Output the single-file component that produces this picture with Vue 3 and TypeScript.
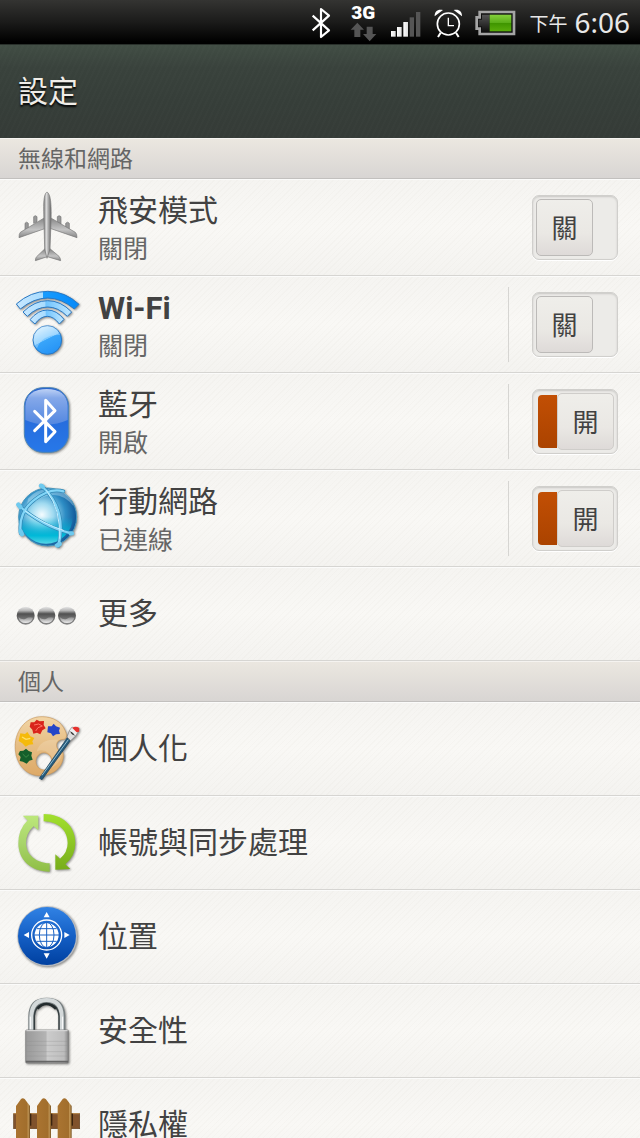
<script setup lang="ts">
import { ref } from 'vue'

interface NetworkItem {
  id: string
  title: string
  on: boolean
  onText: string
  offText: string
  divided: boolean
}

const network = ref<NetworkItem[]>([
  { id: 'airplane', title: '飛安模式', on: false, onText: '開啟', offText: '關閉', divided: false },
  { id: 'wifi', title: 'Wi-Fi', on: false, onText: '開啟', offText: '關閉', divided: true },
  { id: 'bluetooth', title: '藍牙', on: true, onText: '開啟', offText: '關閉', divided: true },
  { id: 'mobile', title: '行動網路', on: true, onText: '已連線', offText: '關閉', divided: true },
])

const personal = [
  { id: 'palette', title: '個人化' },
  { id: 'sync', title: '帳號與同步處理' },
  { id: 'location', title: '位置' },
  { id: 'lock', title: '安全性' },
  { id: 'fence', title: '隱私權' },
]

const pickets = [48, 111, 173]
const dots = [77, 139, 201]
</script>

<template>
  <div class="screen">
    <div class="status">
      <svg class="s-bt" viewBox="30 0 84 132" aria-hidden="true">
        <path d="M38 47 L87 91 L63 111 V27 L87 47 L38 91" fill="none" stroke="#fff" stroke-width="6.5" stroke-linejoin="round" />
      </svg>
      <svg class="s-3g" viewBox="150 0 84 132" aria-hidden="true">
        <text x="154" y="58" font-size="57" class="g3">3G</text>
        <path d="M172 68 L192 89 H181 V111 H163 V89 H152Z" fill="#555" />
        <path d="M209 124 L229 102 H218 V80 H200 V102 H189Z" fill="#555" />
      </svg>
      <svg class="s-signal" viewBox="270 0 96 132" aria-hidden="true">
        <defs>
          <linearGradient id="sg" x1="0" y1="0" x2="1" y2="0"><stop offset="0" stop-color="#fff" /><stop offset="1" stop-color="#ddd" /></linearGradient>
        </defs>
        <rect x="273" y="93" width="14" height="17" fill="url(#sg)" />
        <rect x="291" y="81" width="14" height="29" fill="url(#sg)" />
        <rect x="310" y="66" width="14" height="44" fill="url(#sg)" />
        <rect x="329" y="52" width="13" height="58" fill="#555" />
        <rect x="348" y="36" width="13" height="74" fill="#555" />
      </svg>
      <svg class="s-alarm" viewBox="402 0 87 132" aria-hidden="true">
        <g fill="none" stroke="#fff" stroke-width="5">
          <circle cx="445" cy="72" r="33" />
          <path d="M445 53 V77 H462" stroke-width="4" />
          <path d="M422 98 L414 111 M468 98 L476 111" stroke-width="6" />
        </g>
        <path d="M404 49 C403 34 414 26 429 30Z M486 49 C487 34 476 26 461 30Z" fill="#fff" />
      </svg>
      <svg class="s-battery" viewBox="525 0 126 132" aria-hidden="true">
        <defs>
          <linearGradient id="bat" x1="0" y1="0" x2="0" y2="1"><stop offset="0" stop-color="#85d13b" /><stop offset=".5" stop-color="#58ac18" /><stop offset=".52" stop-color="#3f9500" /><stop offset="1" stop-color="#59ad0b" /></linearGradient>
          <linearGradient id="batoff" x1="0" y1="0" x2="0" y2="1"><stop offset="0" stop-color="#555" /><stop offset="1" stop-color="#111" /></linearGradient>
        </defs>
        <path d="M539 36 H642 V102 H539 V86 H530 V52 H539Z" fill="#111" stroke="#a5a5a5" stroke-width="8" />
        <path d="M546 44 H569 V94 H546 V79 H536 V59 H546Z" fill="url(#batoff)" />
        <rect x="569" y="44" width="65" height="50" fill="url(#bat)" />
      </svg>
      <span class="ampm">下午</span>
      <time class="clock">6:06</time>
    </div>

    <header class="header"><h1>設定</h1></header>

    <main class="list">
      <h2 class="section">無線和網路</h2>
      <div v-for="item in network" :key="item.id" class="row tall">
        <button class="entry" type="button">
          <svg v-if="item.id === 'airplane'" class="icon" viewBox="39 33 204 216" aria-hidden="true">
            <defs>
              <linearGradient id="body" x1="0" y1="0" x2="1" y2="0"><stop offset="0" stop-color="#777" /><stop offset=".35" stop-color="#ddd" /><stop offset=".65" stop-color="#a5a5a5" /><stop offset="1" stop-color="#686868" /></linearGradient>
              <linearGradient id="wing" x1="0" y1="0" x2="0" y2="1"><stop offset="0" stop-color="#858585" /><stop offset=".6" stop-color="#c4c4c4" /><stop offset="1" stop-color="#858585" /></linearGradient>
            </defs>
            <g stroke="#777" stroke-width="2" stroke-linejoin="round">
              <path d="M75 150 V130 Q80 123 85 130 V145Z M101 130 V110 Q106 104 111 110 V125Z M172 125 V110 Q177 104 183 110 V132Z M197 145 V130 Q203 123 208 130 V150Z" fill="#999" />
              <path d="M134 113 L61 157 Q57 161 57 173 L134 146 L153 146 L231 173 Q231 161 226 157 L151 113Z" fill="url(#wing)" />
              <path d="M134 207 L110 230 Q106 234 106 242 L142 230 L182 242 Q181 233 177 229 L151 207Z" fill="url(#wing)" />
              <path d="M141 36 C131 42 130 66 132 125 L134 207 L141 235 L150 207 L153 125 C155 66 151 42 141 36Z" fill="url(#body)" />
            </g>
          </svg>

          <svg v-else-if="item.id === 'wifi'" class="icon shadow" viewBox="39 324 204 216" aria-hidden="true">
            <defs>
              <linearGradient id="wa" x1="0" y1="0" x2="1" y2="0"><stop offset="0" stop-color="#c8e8ff" /><stop offset=".42" stop-color="#a8dcff" /><stop offset=".43" stop-color="#169cff" /><stop offset="1" stop-color="#0789f8" /></linearGradient>
              <linearGradient id="wb" x1="0" y1="0" x2="1" y2="0"><stop offset="0" stop-color="#c8e8ff" /><stop offset=".45" stop-color="#a8dcff" /><stop offset=".47" stop-color="#70c4ff" /><stop offset="1" stop-color="#c2e8ff" /></linearGradient>
              <linearGradient id="wd" x1=".2" y1="0" x2=".7" y2="1"><stop offset="0" stop-color="#d8f1ff" /><stop offset=".48" stop-color="#79c7ff" /><stop offset=".5" stop-color="#39a5fa" /><stop offset="1" stop-color="#2492f5" /></linearGradient>
            </defs>
            <g stroke="#2878c4" stroke-width="3" stroke-linejoin="round">
              <path d="M49 372 Q92 334 143 334 Q195 334 237 373 L223 387 Q184 354 143 354 Q101 354 61 387Z" fill="url(#wa)" />
              <path d="M69 396 Q104 362 143 362 Q182 362 215 396 L202 409 Q174 381 143 381 Q110 381 82 409Z" fill="url(#wb)" />
              <path d="M90 419 Q114 390 142 390 Q170 390 192 418 L178 432 Q161 409 142 409 Q121 409 105 432Z" fill="url(#wb)" />
              <circle cx="142" cy="480" r="43" fill="url(#wd)" />
            </g>
            <path d="M102 488 A40 40 0 0 1 180 465 Q126 463 111 505 Q104 500 102 488Z" fill="#fff" opacity=".28" />
          </svg>

          <svg v-else-if="item.id === 'bluetooth'" class="icon shadow" viewBox="39 45 204 216" aria-hidden="true">
            <defs>
              <linearGradient id="bl" x1="0" y1="0" x2="0" y2="1"><stop offset="0" stop-color="#2762d0" /><stop offset="1" stop-color="#2778e9" /></linearGradient>
              <linearGradient id="bh" x1="0" y1="0" x2="0" y2="1"><stop offset="0" stop-color="#bdd1f5" /><stop offset=".25" stop-color="#84a8e9" /><stop offset="1" stop-color="#5387e0" /></linearGradient>
            </defs>
            <rect x="73" y="53" width="133" height="194" rx="56" fill="url(#bl)" stroke="#4d85b5" stroke-width="3" />
            <path d="M76 150 V108 C78 72 104 57 140 57 C177 57 202 73 203 108 V150 Q140 178 76 150Z" fill="url(#bh)" />
            <path d="M104 124 L165 185 L137 215 V91 L165 122 L104 182" fill="none" stroke="#fff" stroke-width="9" stroke-linecap="round" stroke-linejoin="round" />
          </svg>

          <svg v-else class="icon shadow" viewBox="39 336 204 216" aria-hidden="true">
            <defs>
              <radialGradient id="gl" cx=".4" cy=".46" r=".66"><stop offset="0" stop-color="#f4fcff" /><stop offset=".3" stop-color="#9fdaf0" /><stop offset=".62" stop-color="#2d8cc4" /><stop offset="1" stop-color="#0a4688" /></radialGradient>
              <linearGradient id="gc" x1="0" y1="0" x2="0" y2="1"><stop offset=".5" stop-color="#00b8d8" stop-opacity="0" /><stop offset=".85" stop-color="#00b9d8" /><stop offset="1" stop-color="#55d5e5" /></linearGradient>
            </defs>
            <circle cx="143" cy="441" r="87" fill="url(#gl)" stroke="#4998bd" stroke-width="3" />
            <circle cx="138" cy="441" r="80" fill="url(#gc)" />
            <path d="M84 386 Q115 348 169 358 Q210 370 222 410 Q190 370 151 376 Q105 382 77 430Z" fill="#d5f3ff" opacity=".35" />
            <g fill="none" stroke-linecap="round">
              <g stroke="#3189b6" stroke-width="11"><path d="M58 408 Q128 470 214 490 M125 348 Q202 417 175 528 M62 490 Q54 426 104 389 Q151 352 190 364" /></g>
              <g stroke="#82d5f7" stroke-width="7"><path d="M58 408 Q128 470 214 490 M125 348 Q202 417 175 528 M62 490 Q54 426 104 389 Q151 352 190 364" /></g>
              <path d="M76 423 Q130 461 190 481 M140 362 Q184 420 178 505" stroke="#c7efff" stroke-width="3" />
              <path d="M55 404 L61 411 M212 490 H216 M123 347 L128 350 M171 526 L179 522 M62 484 L66 493" stroke="#6fcaef" stroke-width="13" />
            </g>
          </svg>

          <span class="labels">
            <span class="title" :class="{ latin: item.id === 'wifi' }">{{ item.title }}</span>
            <span class="sub">{{ item.on ? item.onText : item.offText }}</span>
          </span>
        </button>
        <div class="control" :class="{ divided: item.divided }">
          <button class="switch" :class="{ on: item.on }" type="button" role="switch" :aria-checked="item.on" :aria-label="item.title" @click="item.on = !item.on">
            <span class="thumb">{{ item.on ? '開' : '關' }}</span>
          </button>
        </div>
      </div>

      <div class="row">
        <button class="entry" type="button">
          <svg class="icon" viewBox="39 27 204 207" aria-hidden="true">
            <defs>
              <linearGradient id="dt" x1="0" y1="0" x2="0" y2="1"><stop offset="0" stop-color="#e8e8e8" /><stop offset=".22" stop-color="#b5b5b5" /><stop offset=".4" stop-color="#505050" /><stop offset=".65" stop-color="#707070" /><stop offset="1" stop-color="#858585" /></linearGradient>
              <linearGradient id="db" x1="0" y1="0" x2="0" y2="1"><stop offset="0" stop-color="#888" /><stop offset="1" stop-color="#eee" /></linearGradient>
            </defs>
            <g v-for="x in dots" :key="x">
              <circle :cx="x" cy="137" r="27" fill="url(#dt)" />
              <path :d="`M${x - 22} 141 Q${x - 10} 151 ${x} 146 Q${x + 10} 140 ${x + 22} 143 Q${x + 18} 159 ${x} 159 Q${x - 18} 159 ${x - 22} 141Z`" fill="url(#db)" />
            </g>
          </svg>
          <span class="labels"><span class="title">更多</span></span>
        </button>
      </div>

      <h2 class="section">個人</h2>
      <div v-for="item in personal" :key="item.id" class="row">
        <button class="entry" type="button">
          <svg v-if="item.id === 'palette'" class="icon shadow" viewBox="39 42 204 207" aria-hidden="true">
            <defs>
              <linearGradient id="wood" x1="0" y1="0" x2="0" y2="1"><stop offset="0" stop-color="#f2d5a5" /><stop offset=".5" stop-color="#e6bd83" /><stop offset="1" stop-color="#dda967" /></linearGradient>
            </defs>
            <path fill-rule="evenodd" d="M127 50 C73 49 42 99 46 148 C49 195 80 229 124 227 C163 225 191 199 190 164 C189 148 176 156 171 143 C166 127 177 119 190 118 C202 116 201 104 195 91 C184 65 160 51 127 50Z M132 158 A24 26 0 1 1 131 158Z" fill="url(#wood)" stroke="#cf9c5c" stroke-width="2" />
            <path d="M110 155 Q120 116 174 119 Q164 132 172 149 Q178 158 186 161 Q181 191 151 206 Q167 180 147 160 Q130 145 110 155Z" fill="#fff" opacity=".16" />
            <path d="M92 67 L103 67 L110 59 L119 64 L132 63 L131 75 L137 85 L127 91 L121 103 L111 98 L100 101 L97 89 L89 80Z" fill="#d9241b" />
            <path d="M102 75 L116 72 L127 78 L114 83 L107 93" fill="none" stroke="#ff7465" stroke-width="3" />
            <path d="M144 79 L155 79 L161 71 L168 79 L180 83 L177 92 L180 102 L168 103 L159 109 L153 100 L142 97Z" fill="#2546c8" />
            <path d="M61 100 L75 102 L82 96 L91 109 L103 114 L97 124 L100 133 L87 134 L77 140 L67 130 L56 123Z" fill="#f5ba0b" />
            <path d="M66 111 L78 118 L91 115" fill="none" stroke="#ffe16b" stroke-width="4" />
            <path d="M60 153 L70 152 L78 146 L86 153 L96 157 L94 167 L98 179 L88 182 L80 191 L69 185 L59 183 L62 171 L55 163Z" fill="#155f2b" />
            <path d="M68 162 L78 172 L87 164" fill="none" stroke="#3b8b47" stroke-width="3" />
            <path d="M202 113 L212 121 L126 239 L118 235Z" fill="#265b7c" stroke="#183c54" stroke-width="2" />
            <path d="M205 119 L126 226" stroke="#91bdd1" stroke-width="3" />
            <path d="M208 92 L227 108 L212 122 L201 111Z" fill="#ddd" stroke="#777" stroke-width="2" />
            <path d="M208 92 L216 81 L236 92 L227 108Z" fill="#eee" stroke="#888" stroke-width="2" />
            <path d="M217 84 Q226 76 238 84 L237 95 L230 97Z" fill="#e6312d" />
            <path d="M213 97 L221 104" stroke="#333" stroke-width="4" />
          </svg>

          <svg v-else-if="item.id === 'sync'" class="icon shadow" viewBox="39 324 204 207" aria-hidden="true">
            <defs>
              <linearGradient id="s1" x1="0" y1="0" x2="0" y2="1"><stop offset="0" stop-color="#bce77a" /><stop offset=".5" stop-color="#a8d46a" /><stop offset="1" stop-color="#8fbe44" /></linearGradient>
              <linearGradient id="s2" x1="0" y1="0" x2="0" y2="1"><stop offset="0" stop-color="#a2e02e" /><stop offset="1" stop-color="#78ad1c" /></linearGradient>
            </defs>
            <path d="M68 347 H115 V391 L101 379 Q78 399 78 429 C78 463 107 489 149 490 V515 C91 515 55 478 55 430 Q55 388 83 361Z" fill="url(#s1)" />
            <path d="M131 342 C188 342 226 378 226 429 Q226 468 196 493 L211 507 L166 509 V463 L180 476 Q203 457 203 429 C203 391 174 365 131 364Z" fill="url(#s2)" />
          </svg>

          <svg v-else-if="item.id === 'location'" class="icon shadow" viewBox="39 36 204 207" aria-hidden="true">
            <defs>
              <linearGradient id="lc" x1="0" y1="0" x2="0" y2="1"><stop offset="0" stop-color="#3182e4" /><stop offset=".5" stop-color="#145fc5" /><stop offset="1" stop-color="#0040a0" /></linearGradient>
            </defs>
            <circle cx="142" cy="139" r="90" fill="#b5b9bf" />
            <circle cx="141" cy="138" r="87" fill="url(#lc)" />
            <circle cx="140" cy="135" r="45" fill="none" stroke="#fff" stroke-width="4" />
            <circle cx="140" cy="135" r="36" fill="#fff" />
            <g fill="none" stroke="#1b63c4" stroke-width="3">
              <path d="M140 98 V172 M103 135 H177 M110 116 H170 M110 154 H170" />
              <ellipse cx="140" cy="135" rx="22" ry="38" />
            </g>
            <path d="M140 66 L149 82 H131Z M140 206 L149 190 H131Z M71 135 L87 126 V144Z M209 135 L193 126 V144Z" fill="#fff" />
          </svg>

          <svg v-else-if="item.id === 'lock'" class="icon shadow" viewBox="39 318 204 207" aria-hidden="true">
            <defs>
              <linearGradient id="lk" x1="0" y1="0" x2="1" y2="0"><stop offset="0" stop-color="#999" /><stop offset=".48" stop-color="#b4b4b4" /><stop offset=".5" stop-color="#ccc" /><stop offset=".9" stop-color="#bdbdbd" /><stop offset="1" stop-color="#888" /></linearGradient>
            </defs>
            <g fill="none">
              <path d="M95 420 V378 Q96 333 140 333 Q185 333 186 378 V420" stroke="#777f80" stroke-width="20" />
              <path d="M94 420 V378 Q96 330 140 330 Q184 330 185 378 V420" stroke="#d4d9da" stroke-width="12" />
              <path d="M103 420 V378 Q106 342 140 342 Q174 342 177 378 V420" stroke="#353e40" stroke-width="4" />
              <path d="M112 356 Q138 328 168 356" stroke="#232b2d" stroke-width="8" />
              <path d="M91 418 V380 M188 418 V380" stroke="#fff" stroke-width="3" />
            </g>
            <rect x="77" y="420" width="128" height="99" rx="3" fill="url(#lk)" stroke="#777" stroke-width="2" />
            <path d="M79 422 H203" stroke="#ddd" stroke-width="3" />
            <path d="M79 454 H203 M79 466 H203 M79 485 H203 M79 498 H203" stroke="#888" stroke-width="2" opacity=".4" />
            <path d="M78 515 H204" stroke="#666" stroke-width="5" />
          </svg>

          <svg v-else class="icon" viewBox="39 600 204 207" aria-hidden="true">
            <defs>
              <linearGradient id="fn" x1="0" y1="0" x2="1" y2="0"><stop offset="0" stop-color="#aa7431" /><stop offset=".8" stop-color="#a16e2c" /><stop offset=".86" stop-color="#c79c5b" /><stop offset="1" stop-color="#76501f" /></linearGradient>
            </defs>
            <rect x="41" y="671" width="198" height="45" fill="#80522c" stroke="#62401f" stroke-width="2" />
            <path d="M41 671 H239" stroke="#bb8a4c" stroke-width="3" />
            <g v-for="x in pickets" :key="x">
              <rect :x="x + 40" y="671" width="6" height="36" fill="#3b2410" />
              <path :d="`M${x} 807 V648 L${x + 15} 627 Q${x + 20} 623 ${x + 26} 627 L${x + 42} 648 V807Z`" fill="url(#fn)" />
            </g>
          </svg>
          <span class="labels"><span class="title">{{ item.title }}</span></span>
        </button>
      </div>
    </main>
  </div>
</template>

<style>
body {
  background: #f6f5f2;
}
</style>

<style scoped>
.screen {
  display: flex;
  flex-direction: column;
  height: 100vh;
  overflow: hidden;
  font-family: Roboto, "Noto Sans CJK TC", sans-serif;
  color: #424242;
}
.status {
  flex: none;
  display: flex;
  align-items: center;
  justify-content: flex-end;
  gap: 12px;
  height: 44px;
  padding-right: 10px;
  background: linear-gradient(#343432, #1b1b1a 50%, #000 95%);
  color: #e8e8e8;
}
.status svg {
  height: 44px;
}
.s-bt,
.s-3g {
  width: 28px;
}
.s-signal {
  width: 32px;
}
.s-alarm {
  width: 29px;
}
.s-battery {
  width: 42px;
}
.g3 {
  font-family: Roboto, sans-serif;
  font-weight: 900;
  fill: #fff;
}
.ampm {
  font-size: 19px;
  line-height: 28px;
  padding-top: 6px;
  margin-right: -5px;
}
.clock {
  font-family: "Noto Sans", sans-serif;
  font-size: 28px;
  line-height: 44px;
}
.header {
  flex: none;
  display: flex;
  align-items: center;
  height: 94px;
  padding: 0 18px;
  background:
    repeating-linear-gradient(115deg, rgba(255, 255, 255, 0.012) 0 2px, transparent 2px 5px),
    linear-gradient(#414d44, #39423c 25%, #363e39 60%, #353b37);
  box-sizing: border-box;
  border-top: 1px solid #29302b;
}
.header h1 {
  margin: 0;
  font-size: 30px;
  line-height: 44px;
  font-weight: 400;
  color: #f0ede8;
  text-shadow: 0 2px 2px #000;
}
.list {
  flex: 1;
  min-height: 0;
  overflow: hidden;
}
.section {
  margin: 0;
  box-sizing: border-box;
  height: 41px;
  padding: 0 18px;
  border-top: 1px solid #f5f3f0;
  border-bottom: 1px solid #c2c0be;
  background: linear-gradient(#ebe7e0, #d8d5d3);
  font-size: 23px;
  line-height: 42px;
  font-weight: 400;
  color: #666;
}
.row {
  display: flex;
  box-sizing: border-box;
  height: 94px;
  border-bottom: 1px solid #d6d5d2;
  background:
    repeating-linear-gradient(135deg, rgba(120, 110, 80, 0.025) 0 1px, transparent 1px 4px),
    linear-gradient(#f5f4f1, #f9f8f5 50%, #f4f3f0);
  box-shadow: inset 0 1px #fbfbfa;
}
.tall {
  height: 97px;
}
.entry {
  flex: 1;
  display: flex;
  align-items: center;
  gap: 17px;
  padding: 0 13px;
  border: 0;
  background: none;
  font: inherit;
  color: inherit;
  text-align: left;
}
.icon {
  flex: none;
  width: 68px;
  height: 69px;
}
.tall .icon {
  height: 72px;
}
.shadow {
  filter: drop-shadow(1px 1px 1px rgba(0, 0, 0, 0.45));
}
.labels {
  display: flex;
  flex-direction: column;
}
.tall .labels {
  padding-top: 6px;
}
.title {
  font-size: 30px;
  line-height: 40px;
}
.latin {
  font-size: 31px;
  line-height: 42px;
  margin-bottom: -2px;
  font-weight: 700;
}
.sub {
  font-size: 25px;
  line-height: 38px;
  color: #666;
}
.control {
  align-self: center;
  display: flex;
  align-items: center;
  height: 75px;
  padding: 0 22px 0 23px;
  border-left: 1px solid transparent;
}
.divided {
  border-left-color: #d6d5d2;
}
.switch {
  display: flex;
  box-sizing: border-box;
  width: 86px;
  height: 65px;
  padding: 3px;
  border: 1px solid #d0cfcc;
  border-radius: 7px;
  background: #ecebe8;
  box-shadow: inset 0 1px 2px #c8c7c4, 0 1px #fff;
  font: inherit;
  color: inherit;
}
.thumb {
  box-sizing: border-box;
  width: 57px;
  height: 57px;
  border: 1px solid #bcbab8;
  border-radius: 5px;
  background: linear-gradient(#efeeea, #eae8e4 60%, #dedad8);
  font-size: 26px;
  line-height: 58px;
  text-align: center;
}
.on::before {
  content: "";
  flex: 1;
  margin: 2px 0 2px 2px;
  border-radius: 4px 0 0 4px;
  background: linear-gradient(#c24f04, #ab4300);
}
.on .thumb {
  border-color: #cfcdca;
}
</style>
